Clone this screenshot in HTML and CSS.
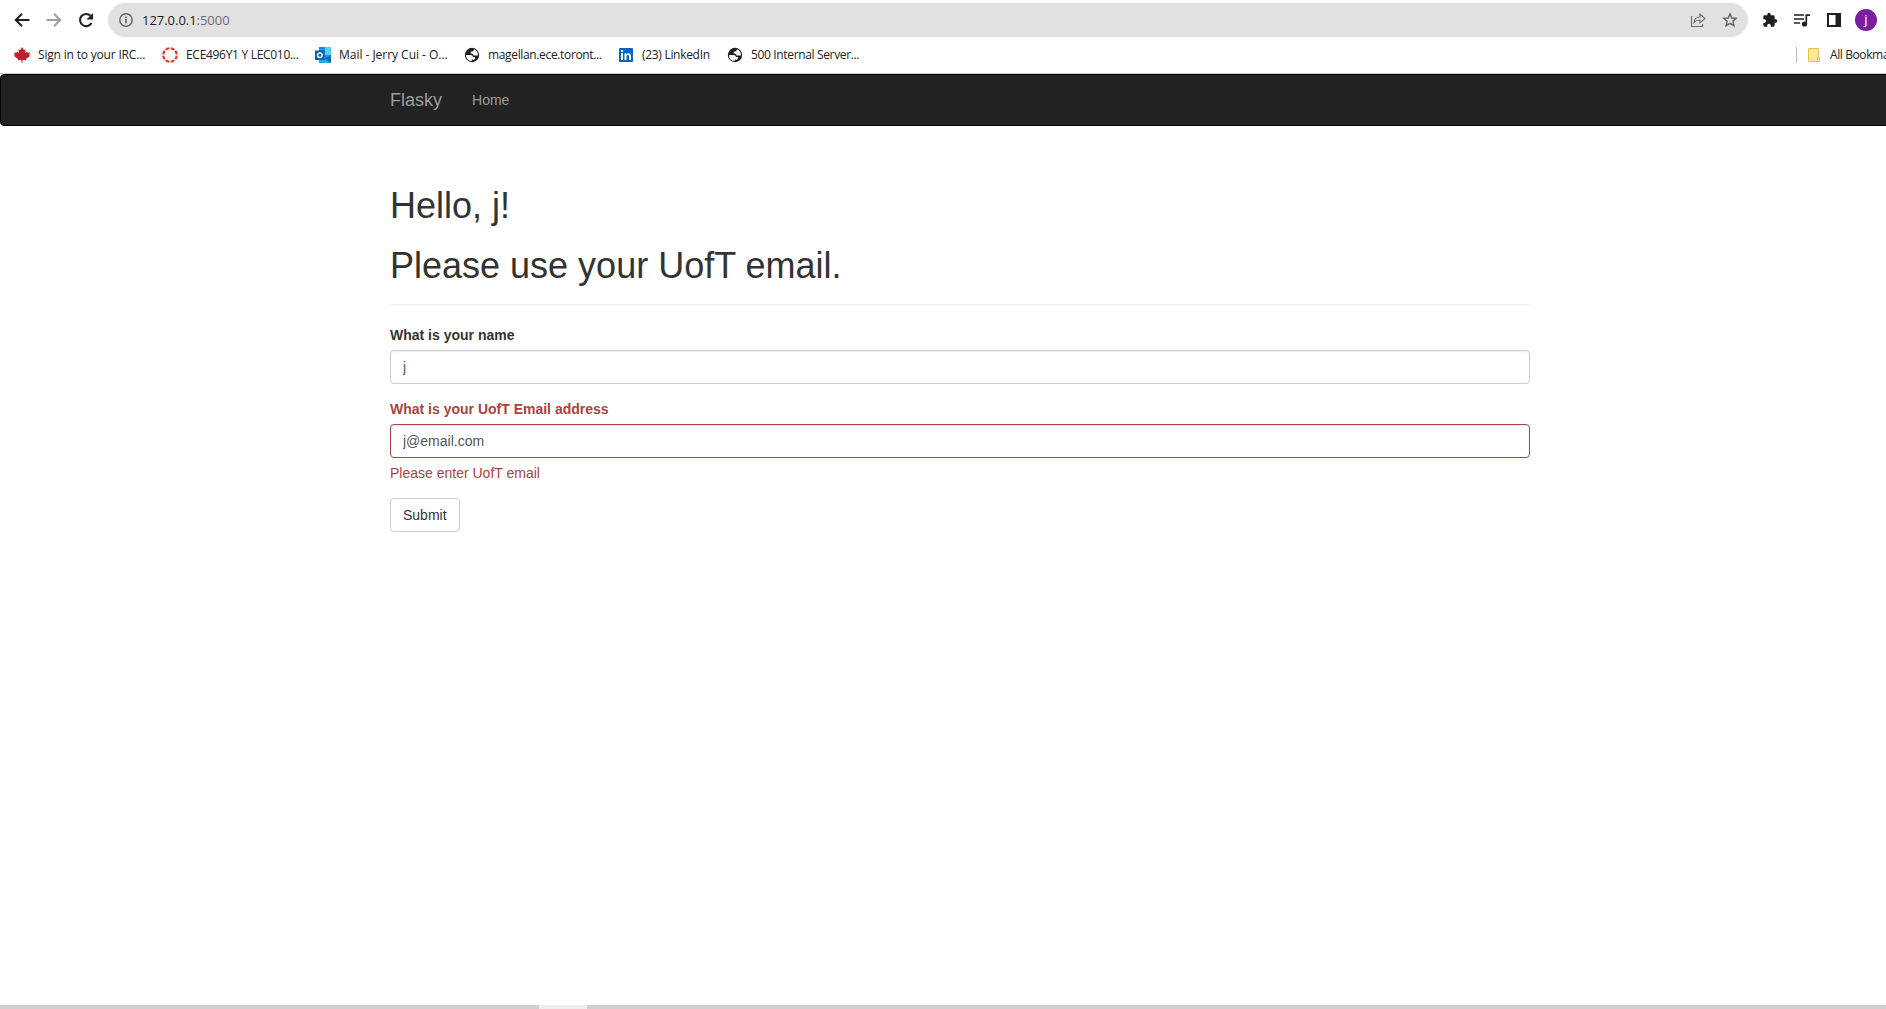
FILE: index.html
```html
<!DOCTYPE html>
<html lang="en">
<head>
<meta charset="utf-8">
<title>Flasky</title>
<link rel="stylesheet" href="styles.css">
</head>
<body>
<header class="browser">
  <div class="toolbar">
    <svg class="nav-icon" viewBox="0 0 24 24"><path d="M21 12H5M12 4.500 4.500 12l7.500 7.500" fill="none" stroke="#202124" stroke-width="2.400"/></svg>
    <svg class="nav-icon" viewBox="0 0 24 24"><path d="M3 12h16M12 4.500 19.500 12 12 19.500" fill="none" stroke="#a0a0a0" stroke-width="2.400"/></svg>
    <svg class="nav-icon" viewBox="0 0 24 24"><path d="M18.600 15.500A7.300 7.300 0 1 1 17.500 7" fill="none" stroke="#202124" stroke-width="2.500"/><path d="M20.500 3.500v8h-8z" fill="#202124"/></svg>
    <div class="omnibox">
      <svg class="info" viewBox="0 0 16 16"><circle cx="8" cy="8" r="6.200" fill="none" stroke="#5f6368" stroke-width="1.400"/><path d="M8 7v4.300M8 4.500v1.600" stroke="#5f6368" stroke-width="1.600"/></svg>
      <span class="url">127.0.0.1<span class="port">:5000</span></span>
      <svg class="share" viewBox="0 0 16 16"><path d="M1.500 4v10.500h11V12M4 10.500C4.300 7 6.500 5 10 5V2l5 4.500-5 4.300V8C7.500 8 5.500 8.700 4 10.500z" fill="none" stroke="#6a6d70" stroke-width="1.100"/></svg>
      <svg class="star" viewBox="0 0 16 16"><path d="M8 1.900 9.800 6l4.400.400-3.300 2.900 1 4.400L8 11.400l-3.900 2.300 1-4.400L1.800 6.400 6.200 6z" fill="none" stroke="#5f6368" stroke-width="1.400"/></svg>
    </div>
    <svg class="tool" viewBox="0 0 24 24"><path fill="#202124" d="M20.500 11H19V7a2 2 0 0 0-2-2h-4V3.500a2.500 2.500 0 0 0-5 0V5H4a2 2 0 0 0-2 2v3.800h1.500a2.700 2.700 0 0 1 0 5.400H2V20a2 2 0 0 0 2 2h3.800v-1.500a2.700 2.700 0 0 1 5.400 0V22H17a2 2 0 0 0 2-2v-4h1.500a2.500 2.500 0 0 0 0-5z"/></svg>
    <svg class="tool media" viewBox="0 0 18 16"><path d="M1 3h10M1 7h10M1 11h6" stroke="#202124" stroke-width="1.700"/><path d="M13.300 12V3.200H17" fill="none" stroke="#202124" stroke-width="1.700"/><circle cx="11.500" cy="12" r="2.600" fill="#202124"/></svg>
    <svg class="tool panel" viewBox="0 0 14 14"><path d="M1 1h12v12H1z" fill="#fff" stroke="#202124" stroke-width="2"/><path d="M8.500 0H14v14H8.500z" fill="#202124"/></svg>
    <span class="avatar">j</span>
  </div>
  <nav class="bookmarks">
    <a class="bookmark irc"><svg class="favicon" viewBox="0 0 16 16"><path d="M8 0 9.800 3 11.500 2.200 11.100 6l2-1.400.600 1.200 2.300-.400-.800 2.700.8.900-4 3 .2 1.300-3.500-.4L8.300 16h-.6l-.4-3.100-3.500.4L4 12 0 9l.8-.9L0 5.400l2.300.4.600-1.200 2 1.400-.4-3.800L6.200 3z" fill="#b9232b"/></svg><span>Sign in to your IRC...</span></a>
    <a class="bookmark ece"><svg class="favicon" viewBox="0 0 16 16"><circle cx="8" cy="8" r="6.800" fill="none" stroke="#e23b30" stroke-width="2.200" pathLength="80" stroke-dasharray="7.500 2.500" stroke-dashoffset="-1.250"/></svg><span>ECE496Y1 Y LEC010...</span></a>
    <a class="bookmark mail"><svg class="favicon" viewBox="0 0 16 16"><path d="M4 0h12v15H4z" fill="#1490df"/><path d="M10 0h6v8h-6z" fill="#50d0fa"/><path d="M4 0h6v4H4z" fill="#168fe0"/><path d="m4 9 6 3 6-4v8H4z" fill="#28a8ea"/><path d="m10 12 6-4v8z" fill="#1268b5"/><path d="M0 3.500h9.500v9.500H0z" fill="#0a5daf"/><circle cx="4.800" cy="8.200" r="2.300" fill="none" stroke="#fff" stroke-width="1.500"/></svg><span>Mail - Jerry Cui - O...</span></a>
    <a class="bookmark magellan"><svg class="favicon" viewBox="0 0 16 16"><circle cx="8" cy="8" r="7.200" fill="#202124"/><path d="M2 8h4.600c1.200 0 2.100.9 2.400 2h2v1.700c-.5.900-1.300 1.100-3 .9v1.200C4.500 14.300 1.900 11.500 2 8zM10 2.300C9.800 4.300 8.500 4.500 6.800 4.700v1.800c1.500 0 2.600.5 2.800 2h4.300c.3-2.600-1.200-5.200-3.900-6.200z" fill="#fff"/></svg><span>magellan.ece.toront...</span></a>
    <a class="bookmark linkedin"><svg class="favicon" viewBox="0 0 16 16"><rect x="1" y="1" width="14" height="14" rx="1" fill="#0a66c2"/><path d="M3 6.300h2V13H3zM6.500 6.300h1.900v1c1-1.700 4.600-1.600 4.600 1.600V13h-2V9.500c0-2-2.500-1.900-2.500 0V13h-2z" fill="#fff"/><circle cx="4" cy="4.100" r="1.200" fill="#fff"/></svg><span>(23) LinkedIn</span></a>
    <a class="bookmark server"><svg class="favicon" viewBox="0 0 16 16"><circle cx="8" cy="8" r="7.200" fill="#202124"/><path d="M2 8h4.600c1.200 0 2.100.9 2.400 2h2v1.700c-.5.900-1.300 1.100-3 .9v1.200C4.500 14.300 1.900 11.500 2 8zM10 2.300C9.800 4.300 8.500 4.500 6.800 4.700v1.800c1.500 0 2.600.5 2.800 2h4.300c.3-2.600-1.200-5.200-3.900-6.200z" fill="#fff"/></svg><span>500 Internal Server...</span></a>
    <a class="bookmark all"><svg class="favicon" viewBox="0 0 16 16"><path d="M2.500 1.500h10v9.500h1v3.500h-11z" fill="#ffe796" stroke="#e9c44b"/><path d="M11.500 14.500v-4h2v4z" fill="#ffe796" stroke="#e9c44b"/></svg><span>All Bookmarks</span></a>
  </nav>
</header>
<nav class="navbar">
  <div class="container navbar-inner">
    <a class="brand">Flasky</a>
    <a class="nav-link">Home</a>
  </div>
</nav>
<main class="container">
  <div class="page-header">
    <h1>Hello, j!</h1>
    <h1>Please use your UofT email.</h1>
  </div>
  <form class="form">
    <div class="form-group">
      <label for="name">What is your name</label>
      <input class="form-control" id="name" type="text" value="j">
    </div>
    <div class="form-group has-error">
      <label for="email">What is your UofT Email address</label>
      <input class="form-control" id="email" type="text" value="j@email.com">
      <p class="help-block">Please enter UofT email</p>
    </div>
    <button class="btn" type="button">Submit</button>
  </form>
</main>
<footer class="taskbar"><span class="active-task"></span></footer>
</body>
</html>
```
FILE: styles.css
```css
* { box-sizing: border-box; }
html { overflow: hidden; }
body {
  margin: 0;
  width: 1920px;
  height: 1009px;
  overflow: hidden;
  display: flex;
  flex-direction: column;
  background: #fff;
  color: #333;
  font: 14px/20px "Liberation Sans", Arial, sans-serif;
}
svg { display: block; flex: none; }

/* Browser toolbar */
.browser {
  flex: none;
  height: 74px;
  overflow: hidden;
  border-bottom: 1px solid #c8c8c8;
  font-family: "Open Sans", "Noto Sans", sans-serif;
  color: #202124;
}
.toolbar { display: flex; align-items: center; height: 40px; padding-left: 12px; }
.nav-icon { width: 20px; height: 20px; margin-right: 12px; }
.omnibox {
  display: flex;
  align-items: center;
  width: 1640px;
  height: 34px;
  padding: 0 10px;
  border-radius: 17px;
  background: #e1e1e1;
}
.info { width: 16px; height: 16px; }
.url { margin-left: 8px; font-size: 13px; letter-spacing: -0.03px; flex: 1; }
.port { color: #6a6d70; }
.share { width: 16px; height: 16px; margin-right: 16px; }
.star { width: 16px; height: 16px; }
.tool { width: 16px; height: 16px; margin-left: 14px; }
.media { width: 18px; margin-left: 15px; }
.panel { width: 14px; height: 14px; margin-left: 16px; }
.avatar {
  width: 22px;
  height: 22px;
  margin-left: 14px;
  border-radius: 50%;
  background: #7b1fa2;
  color: #fff;
  font-size: 13px;
  line-height: 21px;
  text-align: center;
}
.toolbar, .bookmarks { white-space: nowrap; }

/* Bookmark bar */
.bookmarks { display: flex; height: 30px; padding-left: 14px; font-size: 12px; }
.bookmark { display: flex; align-items: center; flex: none; gap: 8px; }
.favicon { width: 16px; height: 16px; }
.irc { width: 148px; letter-spacing: -0.18px; }
.ece { width: 153px; letter-spacing: -0.3px; }
.mail { width: 149px; letter-spacing: -0.03px; }
.magellan { width: 154px; letter-spacing: -0.35px; }
.linkedin { width: 109px; letter-spacing: -0.3px; }
.server { letter-spacing: -0.35px; }
.all { margin-left: auto; width: 124px; letter-spacing: -0.4px; }
.all::before { content: ""; flex: none; width: 1px; height: 16px; margin-right: 1px; background: #bdbdbd; }

/* Page navigation */
.container { width: 1170px; margin: 0 auto; padding: 0 15px; }
.navbar {
  flex: none;
  height: 52px;
  border: 1px solid #080808;
  border-radius: 4px;
  background: #222;
  color: #9d9d9d;
}
.navbar-inner { display: flex; align-items: center; height: 50px; }
.brand { font-size: 18px; margin-right: 30px; }

/* Form page */
.page-header { margin: 60px 0 20px; padding-bottom: 9px; border-bottom: 1px solid #eee; }
h1 { margin: 0 0 10px; font-size: 36px; line-height: 1.1; font-weight: 500; }
h1 + h1 { margin-top: 20px; }
.form-group { margin-bottom: 15px; }
label { display: block; margin-bottom: 5px; font-weight: 700; }
.form-control {
  display: block;
  width: 100%;
  height: 34px;
  padding: 6px 12px;
  border: 1px solid #ccc;
  border-radius: 4px;
  background: #fff;
  box-shadow: inset 0 1px 1px rgba(0, 0, 0, .075);
  color: #555;
  font: inherit;
}
.has-error label, .help-block { color: #a94442; }
.has-error .form-control { border-color: #a94442; }
.help-block { margin: 5px 0 15px; }
.btn {
  display: block;
  height: 34px;
  padding: 6px 12px;
  border: 1px solid #ccc;
  border-radius: 4px;
  background: #fff;
  color: #333;
  font: inherit;
}

.taskbar { display: flex; flex: none; height: 4px; margin-top: auto; padding-left: 539px; background: #cfcfcf; }
.active-task { width: 48px; background: #eee; }
```
